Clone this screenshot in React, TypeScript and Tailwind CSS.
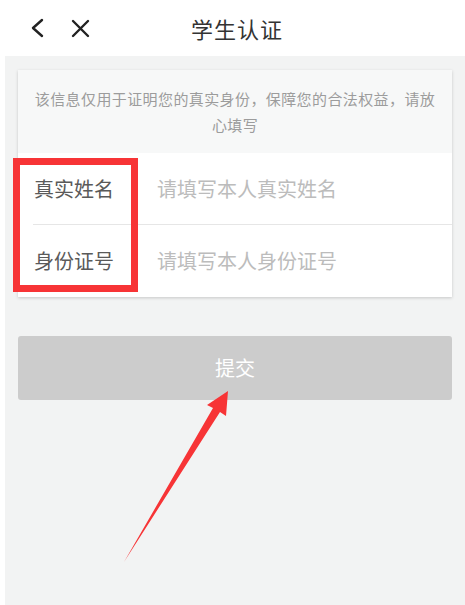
const cjk = { fontFamily: '"Noto Sans CJK SC", "Noto Sans", sans-serif' };

export default function App() {
  return (
    <div className="relative w-[465px] h-[605px] bg-white overflow-hidden" style={cjk}>
      {/* 顶部导航 */}
      <header className="h-[56px] flex items-center">
        <svg className="ml-[29px] w-[16px] h-[20px]" viewBox="0 0 16 20" fill="none">
          <path d="M13 2 L4 10 L13 18" stroke="#222" strokeWidth="2.4" strokeLinecap="round" strokeLinejoin="round" />
        </svg>
        <svg className="ml-[26px] w-[19px] h-[19px]" viewBox="0 0 19 19" fill="none">
          <path d="M2 2 L17 17 M17 2 L2 17" stroke="#222" strokeWidth="2.4" strokeLinecap="round" />
        </svg>
        <h1 className="ml-[101px] text-[22px] leading-none text-[#333] tracking-[1px]">学生认证</h1>
      </header>

      <main className="ml-[5px] h-[549px] bg-[#f2f3f3] px-[13px] pt-[14px]">
        <div className="bg-white shadow-[0_1px_3px_rgba(0,0,0,0.18)]">
          <div className="h-[83px] bg-[#f7f8f8] px-[10px] pt-[16px] text-center text-[15px] leading-[26px] text-[#9c9c9c] tracking-[0.4px]">
            该信息仅用于证明您的真实身份，保障您的合法权益，请放心填写
          </div>
          <div className="h-[71px] flex items-center pl-[16px]">
            <span className="w-[123px] text-[20px] text-[#5a5a5a]">真实姓名</span>
            <span className="text-[20px] text-[#bcbcbc]">请填写本人真实姓名</span>
          </div>
          <div className="ml-[15px] h-px bg-[#e6e6e6]" />
          <div className="h-[72px] flex items-center pl-[16px]">
            <span className="w-[123px] text-[20px] text-[#5a5a5a]">身份证号</span>
            <span className="text-[20px] text-[#bcbcbc]">请填写本人身份证号</span>
          </div>
        </div>

        <button className="mt-[39px] w-full h-[64px] rounded-[3px] bg-[#cccccc] text-[20px] text-white">
          提交
        </button>
      </main>

      {/* 标注 */}
      <div className="absolute left-[13px] top-[158px] w-[125px] h-[134px] border-[7px] border-[#f73436]" />
      <svg className="absolute left-0 top-0 w-[465px] h-[605px] pointer-events-none" viewBox="0 0 465 605">
        <path d="M228 391 L226 416 L220 412 L124 562 L213 408 L207 405 Z" fill="#f73436" />
      </svg>
    </div>
  );
}
